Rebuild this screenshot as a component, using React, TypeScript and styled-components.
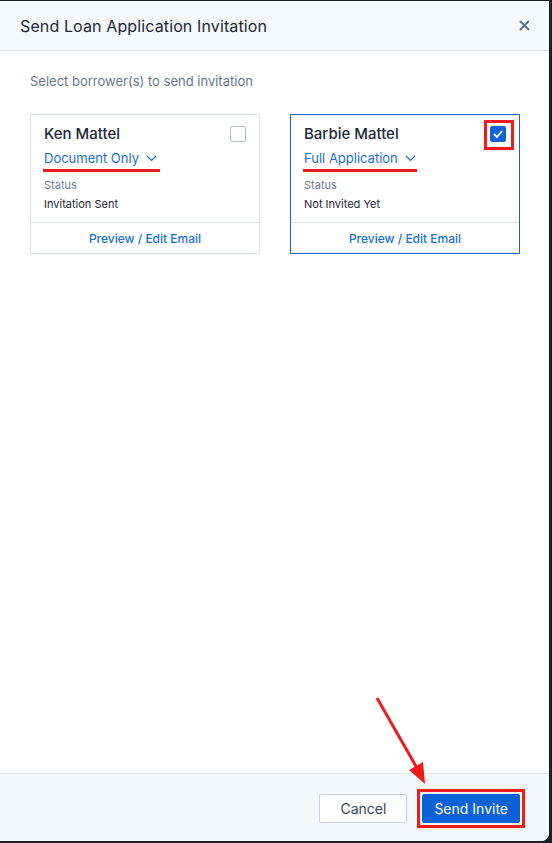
import React from "react";
import styled, { createGlobalStyle } from "styled-components";

const Global = createGlobalStyle`
  html, body { margin: 0; padding: 0; background: #1d1e20; }
  body { font-family: Inter, "Noto Sans", sans-serif; -webkit-font-smoothing: antialiased; }
  #root { width: 552px; height: 843px; }
`;

const Modal = styled.div`
  position: relative;
  margin-top: 1px;
  width: 549px;
  height: 840px;
  background: #ffffff;
  border-bottom-right-radius: 8px;
  display: flex;
  flex-direction: column;
  overflow: hidden;
`;

const Header = styled.header`
  height: 49px;
  flex: none;
  display: flex;
  align-items: center;
  justify-content: space-between;
  padding: 0 18px 0 20px;
  background: #f6f8fa;
  border-bottom: 1px solid #dfe5eb;
`;

const Title = styled.h1`
  margin: 0;
  font-size: 16px;
  font-weight: 400;
  color: #1c2636;
  letter-spacing: 0.12px;
`;

const CloseBtn = styled.button`
  border: 0;
  background: none;
  padding: 0;
  width: 14px;
  height: 14px;
  display: flex;
  align-items: center;
  justify-content: center;
  cursor: pointer;
`;

const Body = styled.main`
  flex: 1;
  padding: 22px 30px 0 30px;
`;

const Lead = styled.p`
  margin: 0 0 25px 0;
  font-size: 13px;
  color: #68778a;
  line-height: 16px;
`;

const Cards = styled.div`
  display: grid;
  grid-template-columns: 230px 230px;
  column-gap: 30px;
`;

const Card = styled.div<{ $selected?: boolean }>`
  border: 1px solid ${(p) => (p.$selected ? "#1766d6" : "#dce3ea")};
  height: 140px;
  box-sizing: border-box;
  display: flex;
  flex-direction: column;
  background: #fff;
`;

const CardMain = styled.div`
  flex: 1;
  padding: 10px 13px 0 13px;
  position: relative;
`;

const NameRow = styled.div`
  display: flex;
  align-items: flex-start;
  justify-content: space-between;
  height: 22px;
`;

const Name = styled.div`
  font-size: 15px;
  font-weight: 500;
  color: #1c2636;
  line-height: 18px;
`;

const Check = styled.div<{ $on?: boolean }>`
  position: relative;
  width: 16px;
  height: 16px;
  box-sizing: border-box;
  margin-top: 1px;
  border-radius: 2px;
  border: 1px solid ${(p) => (p.$on ? "#1563d3" : "#aebacb")};
  background: ${(p) => (p.$on ? "#1563d3" : "#fff")};
  display: flex;
  align-items: center;
  justify-content: center;
`;

const Highlight = styled.div`
  position: absolute;
  left: -7px;
  top: -7px;
  width: 24px;
  height: 24px;
  border: 3px solid #f01b1b;
  pointer-events: none;
`;

const Dropdown = styled.div`
  position: relative;
  display: inline-flex;
  align-items: center;
  gap: 7px;
  font-size: 13px;
  color: #1a6fdc;
  line-height: 16px;
`;

const RedUnderline = styled.div`
  position: absolute;
  left: -1px;
  top: 19px;
  height: 3px;
  background: #f01b1b;
`;

const StatusLabel = styled.div`
  margin-top: 11px;
  font-size: 11px;
  color: #6f7c8c;
  line-height: 14px;
`;

const StatusValue = styled.div`
  margin-top: 5px;
  font-size: 11px;
  color: #1f2733;
  line-height: 14px;
`;

const CardFoot = styled.div`
  height: 30px;
  flex: none;
  border-top: 1px solid #dce3ea;
  display: flex;
  align-items: center;
  justify-content: center;
  font-size: 12px;
  font-weight: 500;
  color: #1a6fdc;
`;

const Footer = styled.footer`
  height: 68px;
  flex: none;
  border-top: 1px solid #dfe5eb;
  background: #f5f7f9;
  display: flex;
  align-items: flex-start;
  justify-content: flex-end;
  gap: 15px;
  padding: 20px 29px 0 0;
  box-sizing: border-box;
`;

const Button = styled.button<{ $primary?: boolean }>`
  position: relative;
  height: 29px;
  padding: 0 ${(p) => (p.$primary ? "11px" : "20px")};
  box-sizing: border-box;
  border-radius: 2px;
  font-family: Inter, "Noto Sans", sans-serif;
  font-size: 14px;
  border: 1px solid ${(p) => (p.$primary ? "#0a62d8" : "#c8d2de")};
  background: ${(p) => (p.$primary ? "#0a62d8" : "#ffffff")};
  color: ${(p) => (p.$primary ? "#ffffff" : "#3a4657")};
  cursor: pointer;
`;

const ButtonHighlight = styled.div`
  position: absolute;
  left: -6px;
  top: -6px;
  right: -6px;
  bottom: -6px;
  border: 3px solid #f01b1b;
  pointer-events: none;
`;

const Arrow = styled.svg`
  position: absolute;
  left: 0;
  top: 0;
  pointer-events: none;
`;

const Chevron = () => (
  <svg width="11" height="7" viewBox="0 0 11 7">
    <path d="M1 1l4.5 4.5L10 1" fill="none" stroke="#1a6fdc" strokeWidth="1.2" />
  </svg>
);

type B = {
  name: string;
  plan: string;
  underline: number;
  status: string;
  selected?: boolean;
};

const borrowers: B[] = [
  { name: "Ken Mattel", plan: "Document Only", underline: 117, status: "Invitation Sent" },
  { name: "Barbie Mattel", plan: "Full Application", underline: 114, status: "Not Invited Yet", selected: true },
];

export default function App() {
  return (
    <>
      <Global />
      <Modal>
        <Header>
          <Title>Send Loan Application Invitation</Title>
          <CloseBtn aria-label="Close">
            <svg width="11" height="11" viewBox="0 0 11 11">
              <path d="M1 1l9 9M10 1l-9 9" stroke="#5f6e84" strokeWidth="1.8" />
            </svg>
          </CloseBtn>
        </Header>
        <Body>
          <Lead>Select borrower(s) to send invitation</Lead>
          <Cards>
            {borrowers.map((b) => (
              <Card key={b.name} $selected={b.selected}>
                <CardMain>
                  <NameRow>
                    <Name>{b.name}</Name>
                    <Check $on={b.selected}>
                      {b.selected && (
                        <>
                          <svg width="10" height="8" viewBox="0 0 10 8">
                            <path d="M1 4l3 3 5-6" fill="none" stroke="#fff" strokeWidth="1.8" />
                          </svg>
                          <Highlight />
                        </>
                      )}
                    </Check>
                  </NameRow>
                  <Dropdown>
                    {b.plan}
                    <Chevron />
                    <RedUnderline style={{ width: b.underline }} />
                  </Dropdown>
                  <StatusLabel>Status</StatusLabel>
                  <StatusValue>{b.status}</StatusValue>
                </CardMain>
                <CardFoot>Preview / Edit Email</CardFoot>
              </Card>
            ))}
          </Cards>
        </Body>
        <Footer>
          <Button>Cancel</Button>
          <Button $primary>
            Send Invite
            <ButtonHighlight />
          </Button>
        </Footer>
        <Arrow width="549" height="840" viewBox="0 1 549 840">
          <line x1="377" y1="698" x2="417" y2="768" stroke="#f01b1b" strokeWidth="3" />
          <polygon points="425,784 409,770 423,762" fill="#f01b1b" />
        </Arrow>
      </Modal>
    </>
  );
}
